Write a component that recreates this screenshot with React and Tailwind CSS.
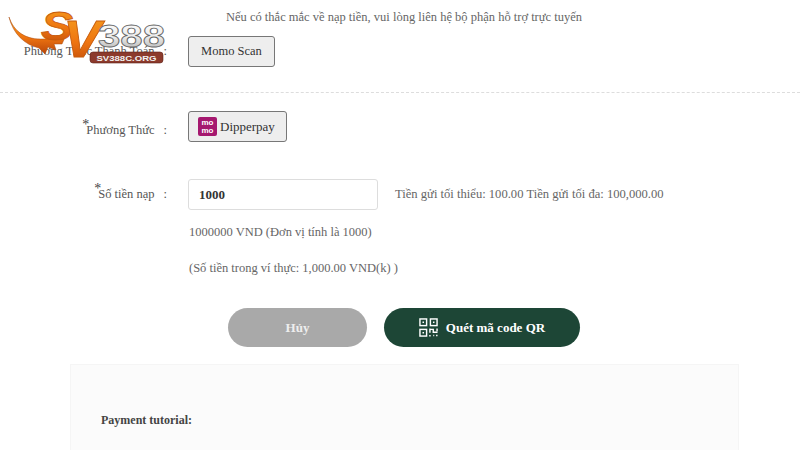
import React from "react";

function Logo() {
  return (
    <svg className="absolute left-[8px] top-[8px]" width="160" height="58" viewBox="0 0 160 58">
      <defs>
        <linearGradient id="orange" x1="0" y1="0" x2="0" y2="1">
          <stop offset="0" stopColor="#f7a01e" />
          <stop offset="0.55" stopColor="#ee7410" />
          <stop offset="1" stopColor="#b9460a" />
        </linearGradient>
        <linearGradient id="silver" x1="0" y1="0" x2="0" y2="1">
          <stop offset="0" stopColor="#ffffff" />
          <stop offset="0.5" stopColor="#ececec" />
          <stop offset="1" stopColor="#a8a8a8" />
        </linearGradient>
      </defs>
      <path d="M1 9 C6 24 18 32 36 31 C44 31 52 30 58 27 L54 36 L46 36 L48 42 L40 39 L37 46 L31 40 C17 37 5 26 1 9 Z" fill="url(#orange)" stroke="#a8480c" strokeWidth="0.5" />
      <text x="33" y="32" fontFamily="'Liberation Sans', sans-serif" fontSize="41" fontWeight="700" fontStyle="italic" fill="url(#orange)" stroke="#c85c0c" strokeWidth="0.8" textLength="32" lengthAdjust="spacingAndGlyphs">S</text>
      <text x="55" y="49" fontFamily="'Liberation Sans', sans-serif" fontSize="51" fontWeight="700" fontStyle="italic" fill="url(#orange)" stroke="#c85c0c" strokeWidth="0.8" textLength="38" lengthAdjust="spacingAndGlyphs">V</text>
      <text x="90" y="39" fontFamily="'Liberation Sans', sans-serif" fontSize="31" fontWeight="700" fill="url(#silver)" stroke="#666666" strokeWidth="0.8" textLength="67" lengthAdjust="spacingAndGlyphs">388</text>
      <rect x="82" y="44" width="73" height="11" rx="3" fill="#8c3a2c" stroke="#5e2118" strokeWidth="0.6" />
      <text x="118.500" y="52.800" textAnchor="middle" fontFamily="'Liberation Sans', sans-serif" fontSize="8" fontWeight="700" fill="#f2f2f2" textLength="60" lengthAdjust="spacingAndGlyphs">SV388C.ORG</text>
    </svg>
  );
}

function MomoIcon() {
  return (
    <span className="flex h-[19px] w-[19px] flex-col items-center justify-center rounded-[2px] bg-[#a5186f] font-['Liberation_Sans',sans-serif] text-[8px] font-bold leading-[8px] text-white">
      <span>mo</span>
      <span>mo</span>
    </span>
  );
}

function QrIcon() {
  return (
    <svg width="19" height="19" viewBox="0 0 20 20" fill="none" stroke="#ffffff" strokeWidth="1.500">
      <rect x="1" y="1" width="7" height="7" />
      <rect x="12" y="1" width="7" height="7" />
      <rect x="1" y="12" width="7" height="7" />
      <rect x="3.700" y="3.700" width="1.600" height="1.600" fill="#ffffff" stroke="none" />
      <rect x="14.700" y="3.700" width="1.600" height="1.600" fill="#ffffff" stroke="none" />
      <rect x="3.700" y="14.700" width="1.600" height="1.600" fill="#ffffff" stroke="none" />
      <path d="M11.500 11 V15.500 M11.500 12 H15 L15 15 H19.500 M19 11 V14 M15 18.500 H16 M18 18.500 H19.500 M11.500 18 V19.500" />
    </svg>
  );
}

function Row({ label, required, children, className, labelClass }) {
  return (
    <div className={"flex items-center " + className}>
      <div className={"flex w-[188px] shrink-0 justify-end pr-[21px] text-[12.500px] text-[#555555] " + labelClass}>
        <span className="relative">
          {required && <span className="absolute -left-[4px] -top-[7px] text-[14px] text-[#444444]">*</span>}
          {label}
        </span>
        <span className="ml-[9px]">:</span>
      </div>
      {children}
    </div>
  );
}

export default function App() {
  return (
    <div className="relative h-[450px] w-[800px] overflow-hidden bg-white font-['Liberation_Serif',serif]">
      <div className="h-[36px] pl-[226px] pt-[8px] text-[12.500px] leading-[18px] text-[#666666]">
        Nếu có thắc mắc về nạp tiền, vui lòng liên hệ bộ phận hỗ trợ trực tuyến
      </div>

      <Row label="Phương Thức Thanh Toán">
        <button className="h-[31px] w-[87px] rounded-[3px] border border-[#777777] bg-[#eeeeee] text-[12.500px] text-[#333333]">
          Momo Scan
        </button>
      </Row>

      <div className="mt-[25px] border-t border-dashed border-[#dddddd]" />

      <Row label="Phương Thức" required className="mt-[18px]" labelClass="pt-[8px]">
        <button className="flex h-[31px] w-[99px] items-center gap-[3px] rounded-[3px] border border-[#777777] bg-[#eeeeee] pl-[9px] text-[13px] text-[#333333]">
          <MomoIcon />
          Dipperpay
        </button>
      </Row>

      <Row label="Số tiền nạp" required className="mt-[37px]">
        <input
          readOnly
          value="1000"
          className="h-[31px] w-[190px] rounded-[3px] border border-[#dddddd] bg-white pl-[10px] text-[13px] font-bold text-[#333333] outline-none"
        />
        <span className="ml-[17px] text-[12.600px] text-[#666666]">
          Tiền gửi tối thiểu: 100.00 Tiền gửi tối đa: 100,000.00
        </span>
      </Row>

      <div className="mt-[13px] pl-[189px] text-[12.500px] leading-[18px] text-[#666666]">
        1000000 VND (Đơn vị tính là 1000)
      </div>
      <div className="mt-[18px] pl-[189px] text-[12.500px] leading-[18px] text-[#666666]">
        (Số tiền trong ví thực: 1,000.00 VND(k) )
      </div>

      <div className="mt-[31px] flex gap-[17px] pl-[228px]">
        <button className="h-[39px] w-[139px] rounded-full bg-[#a9a9a9] text-[13px] font-bold text-[#eeeeee]">Hủy</button>
        <button className="flex h-[39px] w-[196px] items-center justify-center gap-[8px] rounded-full bg-[#1d4636] text-[13px] font-bold text-white">
          <QrIcon />
          Quét mã code QR
        </button>
      </div>

      <div className="ml-[70px] mt-[17px] h-[100px] w-[669px] border border-[#f5f5f5] bg-[#fbfbfb] pl-[30px] pt-[46px]">
        <div className="text-[12px] font-bold leading-[18px] text-[#444444]">Payment tutorial:</div>
      </div>

      <Logo />
    </div>
  );
}
